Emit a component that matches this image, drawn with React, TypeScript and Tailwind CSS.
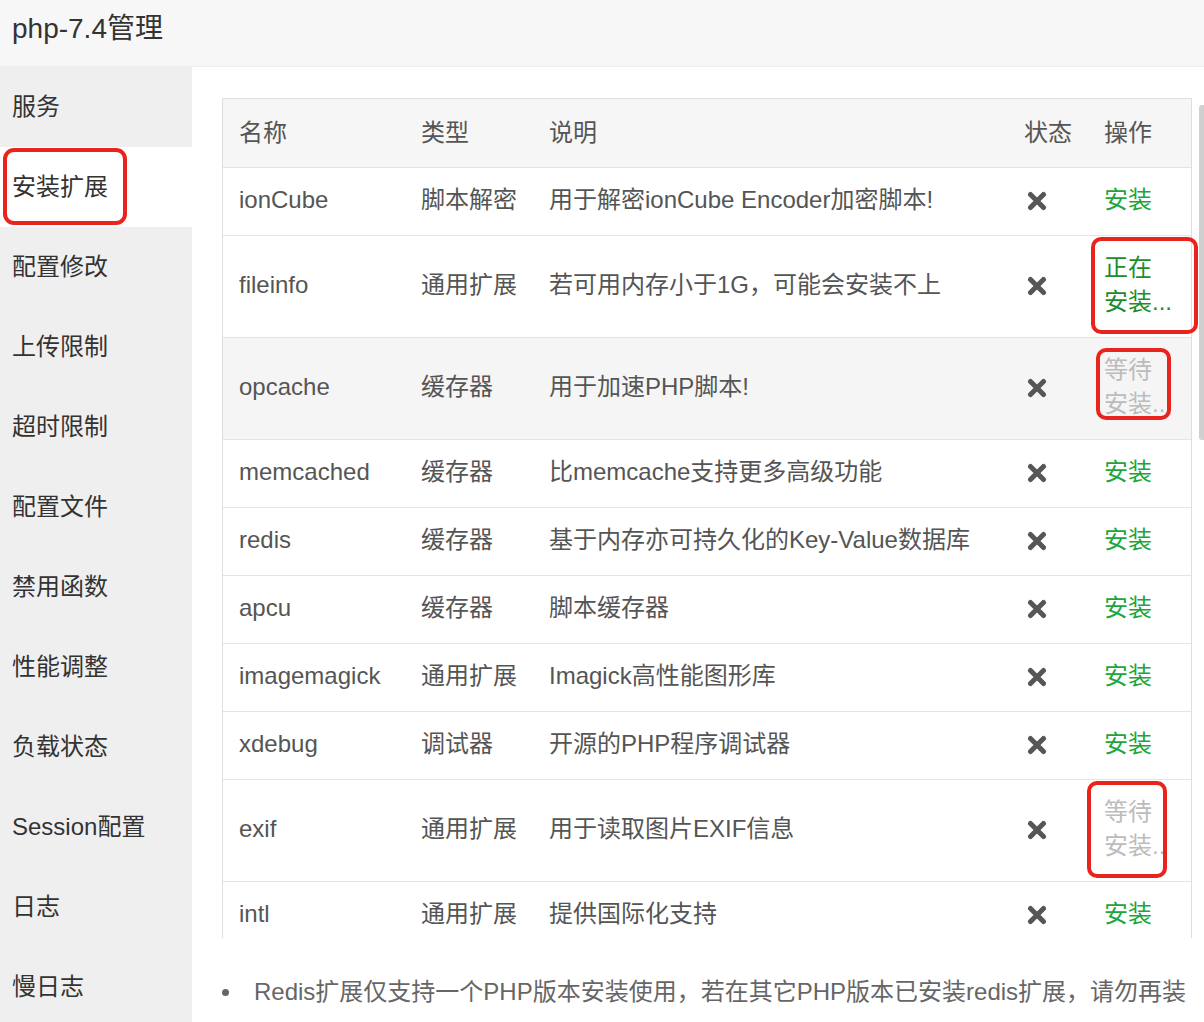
import React from "react";

type Row = {
  name: string;
  type: string;
  desc: string;
  status: "install" | "installing" | "waiting";
  hover?: boolean;
  mark?: string;
};

const rows: Row[] = [
  { name: "ionCube", type: "脚本解密", desc: "用于解密ionCube Encoder加密脚本!", status: "install" },
  { name: "fileinfo", type: "通用扩展", desc: "若可用内存小于1G，可能会安装不上", status: "installing", mark: "left-[-13px] top-[-14px] w-[107px] h-[97px]" },
  { name: "opcache", type: "缓存器", desc: "用于加速PHP脚本!", status: "waiting", hover: true, mark: "left-[-8px] top-[-5px] w-[75px] h-[72px]" },
  { name: "memcached", type: "缓存器", desc: "比memcache支持更多高级功能", status: "install" },
  { name: "redis", type: "缓存器", desc: "基于内存亦可持久化的Key-Value数据库", status: "install" },
  { name: "apcu", type: "缓存器", desc: "脚本缓存器", status: "install" },
  { name: "imagemagick", type: "通用扩展", desc: "Imagick高性能图形库", status: "install" },
  { name: "xdebug", type: "调试器", desc: "开源的PHP程序调试器", status: "install" },
  { name: "exif", type: "通用扩展", desc: "用于读取图片EXIF信息", status: "waiting", mark: "left-[-17px] top-[-14px] w-[80px] h-[97px]" },
  { name: "intl", type: "通用扩展", desc: "提供国际化支持", status: "install" },
];

const menu = ["服务", "安装扩展", "配置修改", "上传限制", "超时限制", "配置文件", "禁用函数", "性能调整", "负载状态", "Session配置", "日志", "慢日志"];

const font = { fontFamily: '"Liberation Sans", "Noto Sans CJK SC", sans-serif' };

const Cross: React.FC = () => (
  <svg width="20" height="20" viewBox="0 0 20 20" className="block">
    <path d="M3.5 3.5 L16.5 16.5 M16.5 3.5 L3.5 16.5" stroke="#565656" strokeWidth="5" strokeLinecap="round" />
  </svg>
);

const Action: React.FC<{ row: Row }> = ({ row }) => {
  if (row.status === "install") {
    return <span className="text-[#20a53a]">安装</span>;
  }
  const installing = row.status === "installing";
  return (
    <div className="relative">
      <div
        className={
          installing
            ? "w-[72px] whitespace-nowrap leading-[34px] text-[#1e8c2c]"
            : "w-[64px] overflow-hidden whitespace-nowrap leading-[34px] text-[#bcbcbc]"
        }
      >
        <div>{installing ? "正在" : "等待"}</div>
        <div>{installing ? "安装..." : "安装.."}</div>
      </div>
      <div className={"pointer-events-none absolute rounded-[10px] border-[4px] border-[#e8241c] " + row.mark}></div>
    </div>
  );
};

const App: React.FC = () => {
  return (
    <div className="relative h-[1022px] w-[1204px] overflow-hidden bg-white text-[#555]" style={font}>
      {/* header */}
      <div className="flex h-[67px] items-start border-b border-[#ececec] bg-[#f7f7f7] pl-[12px] pt-[8px] text-[28px] text-[#333]">
        php-7.4管理
      </div>

      <div className="flex">
        {/* sidebar */}
        <div className="flex h-[955px] w-[192px] shrink-0 flex-col bg-[#efeff0]">
          {menu.map((m, i) => (
            <div
              key={m}
              className={
                "relative flex h-[80px] shrink-0 items-center pl-[12px] text-[24px] text-[#333] " +
                (i === 1 ? "bg-white" : "")
              }
            >
              {m}
              {i === 1 && (
                <div className="pointer-events-none absolute left-[3px] top-[1px] h-[77px] w-[124px] rounded-[11px] border-[4px] border-[#e8241c]"></div>
              )}
            </div>
          ))}
        </div>

        {/* main */}
        <div className="flex-1 pl-[30px] pt-[31px]">
          <div className="h-[840px] w-[970px] border-l border-r border-t border-[#dedede] [clip-path:inset(0_-20px_0_-20px)]">
            <table className="w-full table-fixed border-collapse text-left text-[24px]">
              <colgroup>
                <col className="w-[182px]" />
                <col className="w-[128px]" />
                <col />
                <col className="w-[80px]" />
                <col className="w-[103px]" />
              </colgroup>
              <thead>
                <tr className="h-[68px] border-b border-[#e4e4e4] bg-[#f6f6f6]">
                  <th className="pl-[16px] font-normal">名称</th>
                  <th className="pl-[16px] font-normal">类型</th>
                  <th className="pl-[16px] font-normal">说明</th>
                  <th className="pl-[16px] font-normal">状态</th>
                  <th className="pl-[16px] font-normal">操作</th>
                </tr>
              </thead>
              <tbody>
                {rows.map((r) => (
                  <tr
                    key={r.name}
                    className={
                      "border-b border-[#e4e4e4] " +
                      (r.status === "install" ? "h-[68px] " : "h-[102px] ") +
                      (r.hover ? "bg-[#f5f5f5]" : "")
                    }
                  >
                    <td className="pb-[2px] pl-[16px]">{r.name}</td>
                    <td className="pb-[2px] pl-[16px]">{r.type}</td>
                    <td className="whitespace-nowrap pb-[2px] pl-[16px]">{r.desc}</td>
                    <td className="pl-[19px]">
                      <Cross />
                    </td>
                    <td className="pb-[2px] pl-[16px]">
                      <Action row={r} />
                    </td>
                  </tr>
                ))}
              </tbody>
            </table>
          </div>

          <ul className="mt-[36px] text-[24px] text-[#666]">
            <li className="flex items-center gap-[25px] whitespace-nowrap">
              <span className="h-[7px] w-[7px] shrink-0 rounded-full bg-[#666]"></span>
              Redis扩展仅支持一个PHP版本安装使用，若在其它PHP版本已安装redis扩展，请勿再装
            </li>
          </ul>
        </div>
      </div>

      {/* scrollbar */}
      <div className="absolute right-0 top-[105px] h-[335px] w-[5px] rounded-l-[3px] bg-[#cfcfcf]"></div>
    </div>
  );
};

export default App;
